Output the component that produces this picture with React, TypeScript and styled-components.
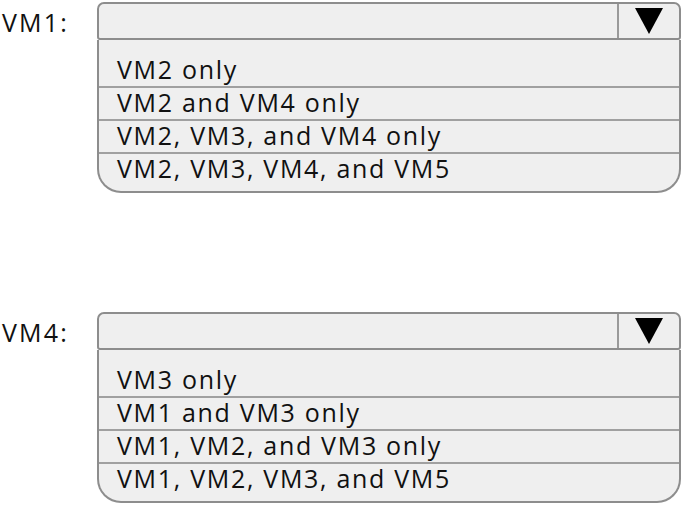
import React from 'react';
import styled, { createGlobalStyle } from 'styled-components';

const GlobalStyle = createGlobalStyle`
  html, body {
    margin: 0;
    padding: 0;
    background: #fff;
  }
  body {
    font-family: "Open Sans", "Noto Sans", sans-serif;
    color: #111;
  }
`;

const Page = styled.div`
  width: 683px;
  height: 506px;
  display: flex;
  flex-direction: column;
  gap: 119px;
  padding-top: 2px;
  box-sizing: border-box;
`;

const Field = styled.div`
  display: flex;
  align-items: flex-start;
`;

const Label = styled.div`
  width: 95px;
  padding-left: 2px;
  font-size: 25px;
  line-height: 1;
  letter-spacing: 2.2px;
  padding-top: 8px;
`;

const Dropdown = styled.div`
  width: 584px;
  display: flex;
  flex-direction: column;
`;

const Header = styled.div`
  height: 34px;
  display: flex;
  border: 2px solid #8d8d8d;
  border-radius: 7px 7px 3px 3px;
  background: #efefef;
`;

const Selected = styled.div`
  flex: 1;
`;

const ArrowCell = styled.div`
  width: 60px;
  border-left: 2px solid #9a9a9a;
  display: flex;
  align-items: center;
  justify-content: center;
`;

const List = styled.div`
  border: 2px solid #8d8d8d;
  border-top: none;
  border-radius: 0 0 24px 24px;
  background: #efefef;
  overflow: hidden;
`;

const Option = styled.div<{ $first?: boolean; $last?: boolean }>`
  height: ${(p) => (p.$first ? 48 : p.$last ? 37 : 33)}px;
  box-sizing: border-box;
  padding-left: 18px;
  display: flex;
  align-items: flex-end;
  padding-bottom: ${(p) => (p.$last ? 10 : 4)}px;
  font-size: 25px;
  line-height: 1;
  letter-spacing: 1.7px;
  border-bottom: ${(p) => (p.$last ? 'none' : '2px solid #a0a0a0')};
`;

const Arrow = () => (
  <svg width="30" height="28" viewBox="0 0 30 28">
    <polygon points="1,1 29,1 15,27" fill="#000" />
  </svg>
);

type Props = { label: string; options: string[] };

const Select = ({ label, options }: Props) => (
  <Field>
    <Label>{label}</Label>
    <Dropdown>
      <Header>
        <Selected />
        <ArrowCell>
          <Arrow />
        </ArrowCell>
      </Header>
      <List>
        {options.map((o, i) => (
          <Option key={o} $first={i === 0} $last={i === options.length - 1}>
            {o}
          </Option>
        ))}
      </List>
    </Dropdown>
  </Field>
);

export default function App() {
  return (
    <>
      <GlobalStyle />
      <Page>
        <Select
          label="VM1:"
          options={['VM2 only', 'VM2 and VM4 only', 'VM2, VM3, and VM4 only', 'VM2, VM3, VM4, and VM5']}
        />
        <Select
          label="VM4:"
          options={['VM3 only', 'VM1 and VM3 only', 'VM1, VM2, and VM3 only', 'VM1, VM2, VM3, and VM5']}
        />
      </Page>
    </>
  );
}
